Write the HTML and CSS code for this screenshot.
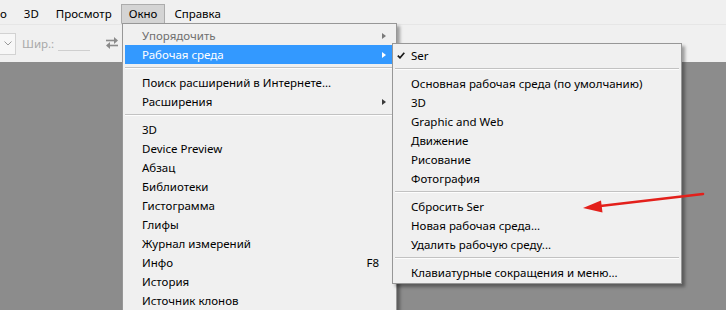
FILE: index.html
```html
<!DOCTYPE html>
<html lang="ru">
<head>
<meta charset="utf-8">
<link rel="stylesheet" href="styles.css">
</head>
<body>
<div class="app">
  <div class="menubar">
    <span class="mb-item mb-cut">о</span>
    <span class="mb-item">3D</span>
    <span class="mb-item">Просмотр</span>
    <span class="mb-item mb-open">Окно</span>
    <span class="mb-item">Справка</span>
  </div>
  <div class="toolbar">
    <div class="combo">
      <svg width="8" height="5" viewBox="0 0 8 5"><path d="M0.5 0.5 L4 4 L7.5 0.5" fill="none" stroke="#9a9a9a" stroke-width="1"/></svg>
    </div>
    <span class="tb-label">Шир.:</span>
    <span class="tb-field"></span>
    <svg class="swap" width="16" height="16" viewBox="0 0 16 16">
      <path d="M2 5.5 H12" stroke="#8a8a8a" stroke-width="1.6"/>
      <path d="M10 2 L14 5.5 L10 9 Z" fill="#8a8a8a"/>
      <path d="M14 10.5 H4" stroke="#8a8a8a" stroke-width="1.6"/>
      <path d="M6 7 L2 10.5 L6 14 Z" fill="#8a8a8a"/>
    </svg>
  </div>
  <div class="canvas"></div>

  <div class="menu menu-window">
    <div class="row disabled"><span class="label">Упорядочить</span><span class="arrow"></span></div>
    <div class="row active"><span class="label">Рабочая среда</span><span class="arrow"></span></div>
    <div class="sep"></div>
    <div class="row"><span class="label">Поиск расширений в Интернете...</span></div>
    <div class="row"><span class="label">Расширения</span><span class="arrow"></span></div>
    <div class="sep"></div>
    <div class="row"><span class="label">3D</span></div>
    <div class="row"><span class="label">Device Preview</span></div>
    <div class="row"><span class="label">Абзац</span></div>
    <div class="row"><span class="label">Библиотеки</span></div>
    <div class="row"><span class="label">Гистограмма</span></div>
    <div class="row"><span class="label">Глифы</span></div>
    <div class="row"><span class="label">Журнал измерений</span></div>
    <div class="row"><span class="label">Инфо</span><span class="shortcut">F8</span></div>
    <div class="row"><span class="label">История</span></div>
    <div class="row"><span class="label">Источник клонов</span></div>
  </div>

  <div class="menu menu-sub">
    <div class="row checked"><span class="check">
      <svg width="8" height="7" viewBox="0 0 8 7"><path d="M0.8 3.6 L3 5.8 L7.3 0.8" fill="none" stroke="#1a1a1a" stroke-width="1.7"/></svg>
    </span><span class="label">Ser</span></div>
    <div class="sep"></div>
    <div class="row"><span class="label">Основная рабочая среда (по умолчанию)</span></div>
    <div class="row"><span class="label">3D</span></div>
    <div class="row"><span class="label">Graphic and Web</span></div>
    <div class="row"><span class="label">Движение</span></div>
    <div class="row"><span class="label">Рисование</span></div>
    <div class="row"><span class="label">Фотография</span></div>
    <div class="sep"></div>
    <div class="row"><span class="label">Сбросить Ser</span></div>
    <div class="row"><span class="label">Новая рабочая среда...</span></div>
    <div class="row"><span class="label">Удалить рабочую среду...</span></div>
    <div class="sep"></div>
    <div class="row"><span class="label">Клавиатурные сокращения и меню...</span></div>
  </div>

  <svg class="annot" width="726" height="310" viewBox="0 0 726 310">
    <path d="M703 194 L596 206.5" stroke="#e3201b" stroke-width="2.6" stroke-linecap="round"/>
    <path d="M583 208 L601 200.5 L602.5 212.5 Z" fill="#e3201b"/>
  </svg>
</div>
</body>
</html>
```

FILE: styles.css
```css
* { box-sizing: border-box; }
html, body { margin: 0; padding: 0; }
body {
  width: 726px;
  height: 310px;
  overflow: hidden;
  font-family: "Noto Sans", "Open Sans", sans-serif;
  font-size: 11.5px;
  color: #000;
}
.app {
  position: relative;
  width: 726px;
  height: 310px;
  display: flex;
  flex-direction: column;
  background: #8c8c8c;
  overflow: hidden;
}
.menubar {
  height: 24px;
  background: #f0f0f0;
  display: flex;
  align-items: flex-start;
  padding-top: 4px;
  gap: 1px;
}
.mb-item {
  height: 20px;
  line-height: 18px;
  padding: 0 7px;
  border: 1px solid transparent;
  white-space: nowrap;
}
.mb-cut { margin-left: -8px; }
.mb-open {
  background: #d4d4d4;
  border-color: #acacac;
  border-bottom-color: #d4d4d4;
}
.toolbar {
  height: 38px;
  background: #f0f0f0;
  border-top: 1px solid #e6e6e6;
  display: flex;
  align-items: center;
}
.combo {
  width: 17px;
  height: 22px;
  margin-left: -1px;
  background: #f7f7f7;
  border: 1px solid #d2d2d2;
  border-left: none;
  display: flex;
  align-items: center;
  justify-content: flex-end;
  padding-right: 3px;
}
.tb-label {
  margin-left: 6px;
  color: #a9a9a9;
}
.tb-field {
  width: 32px;
  height: 1px;
  margin-left: 4px;
  margin-top: 13px;
  background: #cfcfcf;
}
.swap { margin-left: 14px; margin-top: -2px; }
.canvas { flex: 1; background: #8c8c8c; }

.menu {
  position: absolute;
  background: #f0f0f0;
  border: 1px solid #979797;
  padding: 2px;
  box-shadow: 3px 3px 3px rgba(0,0,0,0.35);
}
.menu-window {
  left: 122px;
  top: 23px;
  width: 275px;
  height: 300px;
}
.menu-sub {
  left: 392px;
  top: 43px;
  width: 290px;
  padding-bottom: 1px;
}
.row {
  height: 19px;
  display: flex;
  align-items: center;
  position: relative;
  white-space: nowrap;
}
.menu-window .row { padding-left: 17px; padding-right: 8px; }
.menu-sub .row { padding-left: 16px; }
.row.disabled { color: #6f6f6f; }
.row.active { background: #3399ff; color: #fff; }
.arrow {
  margin-left: auto;
  width: 0;
  height: 0;
  border-top: 3.5px solid transparent;
  border-bottom: 3.5px solid transparent;
  border-left: 4px solid #3a3a3a;
}
.row.disabled .arrow { border-left-color: #7a7a7a; }
.row.active .arrow { border-left-color: #fff; }
.shortcut { margin-left: auto; margin-right: 7px; }
.check {
  position: absolute;
  left: 2px;
  top: 6px;
  display: flex;
}
.sep {
  height: 9px;
  padding-top: 3px;
}
.sep::before {
  content: "";
  display: block;
  height: 1px;
  background: #c2c2c2;
  border-bottom: 1px solid #fdfdfd;
  box-sizing: content-box;
}
.annot {
  position: absolute;
  left: 0;
  top: 0;
  pointer-events: none;
}
```
